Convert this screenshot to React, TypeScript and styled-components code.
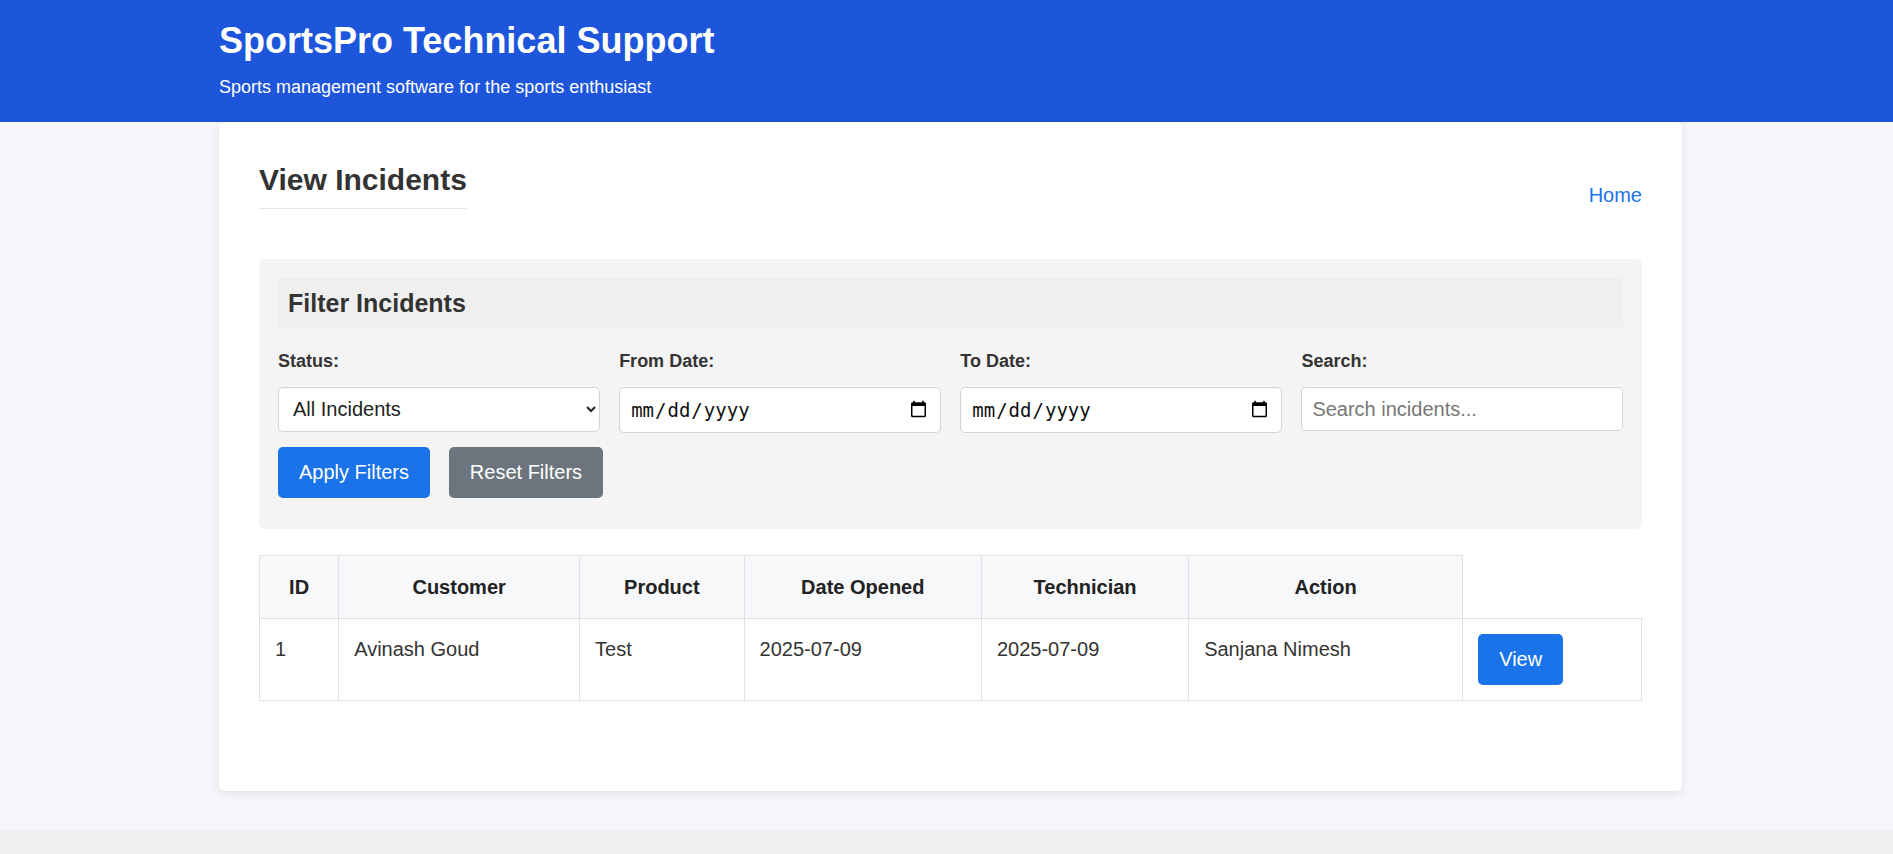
import React from "react";
import styled, { createGlobalStyle } from "styled-components";

const GlobalStyle = createGlobalStyle`
  html, body {
    margin: 0;
    padding: 0;
    background: #efefef;
  }
  body {
    font-family: "Liberation Sans", Arial, Helvetica, sans-serif;
    color: #333;
  }
  *, *::before, *::after {
    box-sizing: border-box;
  }
`;

const Page = styled.div`
  background: #f4f6fa;
  padding-bottom: 40px;
`;

const Header = styled.header`
  background: #1d56db;
  color: #ffffff;
  padding: 19px 0 24px;
`;

const Container = styled.div`
  width: 1463px;
  margin-left: 219px;
`;

const SiteTitle = styled.h1`
  margin: 0;
  font-size: 36px;
  line-height: 44px;
  font-weight: 700;
`;

const Tagline = styled.p`
  margin: 12.5px 0 0;
  font-size: 18px;
  line-height: 22px;
`;

const Card = styled.main`
  background: #ffffff;
  border-radius: 6px;
  box-shadow: 0 2px 8px rgba(0, 0, 0, 0.09);
  padding: 40px 40px 40px;
`;

const TitleRow = styled.div`
  display: flex;
  justify-content: space-between;
  align-items: center;
  margin-bottom: 30px;
`;

const PageTitle = styled.h2`
  display: inline-block;
  margin: 0 0 20px;
  padding-bottom: 10px;
  border-bottom: 1px solid #e6e6e6;
  font-size: 30px;
  line-height: 36px;
  font-weight: 700;
  color: #333;
`;

const HomeLink = styled.a`
  font-size: 20px;
  line-height: 23px;
  color: #1a73e8;
  text-decoration: none;
`;

const FilterPanel = styled.section`
  background: #f4f4f4;
  border-radius: 6px;
  padding: 19px;
`;

const FilterTitle = styled.h3`
  margin: 0;
  background: #efefef;
  padding: 11px 10px 9px;
  font-size: 25px;
  line-height: 29.7px;
  font-weight: 700;
  color: #333;
`;

const FilterGrid = styled.div`
  display: grid;
  grid-template-columns: repeat(4, 1fr);
  column-gap: 19.5px;
  align-items: start;
  margin-top: 24px;
`;

const Field = styled.div`
  display: flex;
  flex-direction: column;
`;

const Label = styled.label`
  font-size: 18px;
  line-height: 21px;
  font-weight: 700;
  color: #333;
  margin-bottom: 14.7px;
`;

const controlBase = `
  width: 100%;
  border: 1px solid #d4d4d4;
  border-radius: 5px;
  background: #ffffff;
  color: #222;
  padding: 0 10px;
  outline: none;
`;

const Select = styled.select`
  ${controlBase}
  height: 45px;
  font-family: "Liberation Sans", Arial, sans-serif;
  font-size: 20px;
`;

const DateInput = styled.input`
  ${controlBase}
  height: 46px;
  font-family: "DejaVu Sans Mono", "Liberation Mono", monospace;
  font-size: 19px;
  color: #111;
`;

const SearchInput = styled.input`
  ${controlBase}
  height: 44.4px;
  font-family: "Liberation Sans", Arial, sans-serif;
  font-size: 20px;
  &::placeholder {
    color: #777;
  }
`;

const ButtonRow = styled.div`
  display: flex;
  gap: 18.8px;
  margin-top: 14px;
  margin-bottom: 12px;
`;

const Button = styled.button<{ $variant?: "primary" | "secondary" }>`
  display: inline-block;
  vertical-align: top;
  border: none;
  border-radius: 5px;
  padding: 14px 21px;
  font-family: "Liberation Sans", Arial, sans-serif;
  font-size: 20px;
  line-height: 23px;
  color: #ffffff;
  cursor: pointer;
  background: ${(p) => (p.$variant === "secondary" ? "#6c757d" : "#1a73e8")};
`;

const Table = styled.table`
  width: 100%;
  margin: 26px 0 50px;
  border-collapse: collapse;
  table-layout: fixed;
  font-size: 20px;
`;

const Th = styled.th`
  border: 1px solid #dee2e6;
  background: #f7f8fa;
  padding: 15px;
  line-height: 32px;
  font-weight: 700;
  text-align: center;
  color: #222;
`;

const Td = styled.td`
  border: 1px solid #dee2e6;
  padding: 14px 15px 16px;
  line-height: 32px;
  vertical-align: top;
  text-align: left;
  color: #333;
`;

const ActionTd = styled(Td)`
  padding: 15px;
`;

const columns = [79.2, 240.9, 164.5, 237.4, 207.2, 274];

const incidents = [
  {
    id: 1,
    customer: "Avinash Goud",
    product: "Test",
    opened: "2025-07-09",
    closed: "2025-07-09",
    technician: "Sanjana Nimesh",
  },
];

export default function App() {
  return (
    <>
      <GlobalStyle />
      <Page>
        <Header>
          <Container>
            <SiteTitle>SportsPro Technical Support</SiteTitle>
            <Tagline>Sports management software for the sports enthusiast</Tagline>
          </Container>
        </Header>
        <Container>
          <Card>
            <TitleRow>
              <PageTitle>View Incidents</PageTitle>
              <HomeLink href="#">Home</HomeLink>
            </TitleRow>

            <FilterPanel>
              <FilterTitle>Filter Incidents</FilterTitle>
              <FilterGrid>
                <Field>
                  <Label htmlFor="status">Status:</Label>
                  <Select id="status" defaultValue="all">
                    <option value="all">All Incidents</option>
                    <option value="open">Open</option>
                    <option value="closed">Closed</option>
                  </Select>
                </Field>
                <Field>
                  <Label htmlFor="from">From Date:</Label>
                  <DateInput id="from" type="date" />
                </Field>
                <Field>
                  <Label htmlFor="to">To Date:</Label>
                  <DateInput id="to" type="date" />
                </Field>
                <Field>
                  <Label htmlFor="search">Search:</Label>
                  <SearchInput id="search" type="text" placeholder="Search incidents..." />
                </Field>
              </FilterGrid>
              <ButtonRow>
                <Button $variant="primary">Apply Filters</Button>
                <Button $variant="secondary">Reset Filters</Button>
              </ButtonRow>
            </FilterPanel>

            <Table>
              <colgroup>
                {columns.map((w, i) => (
                  <col key={i} style={{ width: `${w}px` }} />
                ))}
                <col />
              </colgroup>
              <thead>
                <tr>
                  <Th>ID</Th>
                  <Th>Customer</Th>
                  <Th>Product</Th>
                  <Th>Date Opened</Th>
                  <Th>Technician</Th>
                  <Th>Action</Th>
                </tr>
              </thead>
              <tbody>
                {incidents.map((row) => (
                  <tr key={row.id}>
                    <Td>{row.id}</Td>
                    <Td>{row.customer}</Td>
                    <Td>{row.product}</Td>
                    <Td>{row.opened}</Td>
                    <Td>{row.closed}</Td>
                    <Td>{row.technician}</Td>
                    <ActionTd>
                      <Button $variant="primary">View</Button>
                    </ActionTd>
                  </tr>
                ))}
              </tbody>
            </Table>
          </Card>
        </Container>
      </Page>
    </>
  );
}
